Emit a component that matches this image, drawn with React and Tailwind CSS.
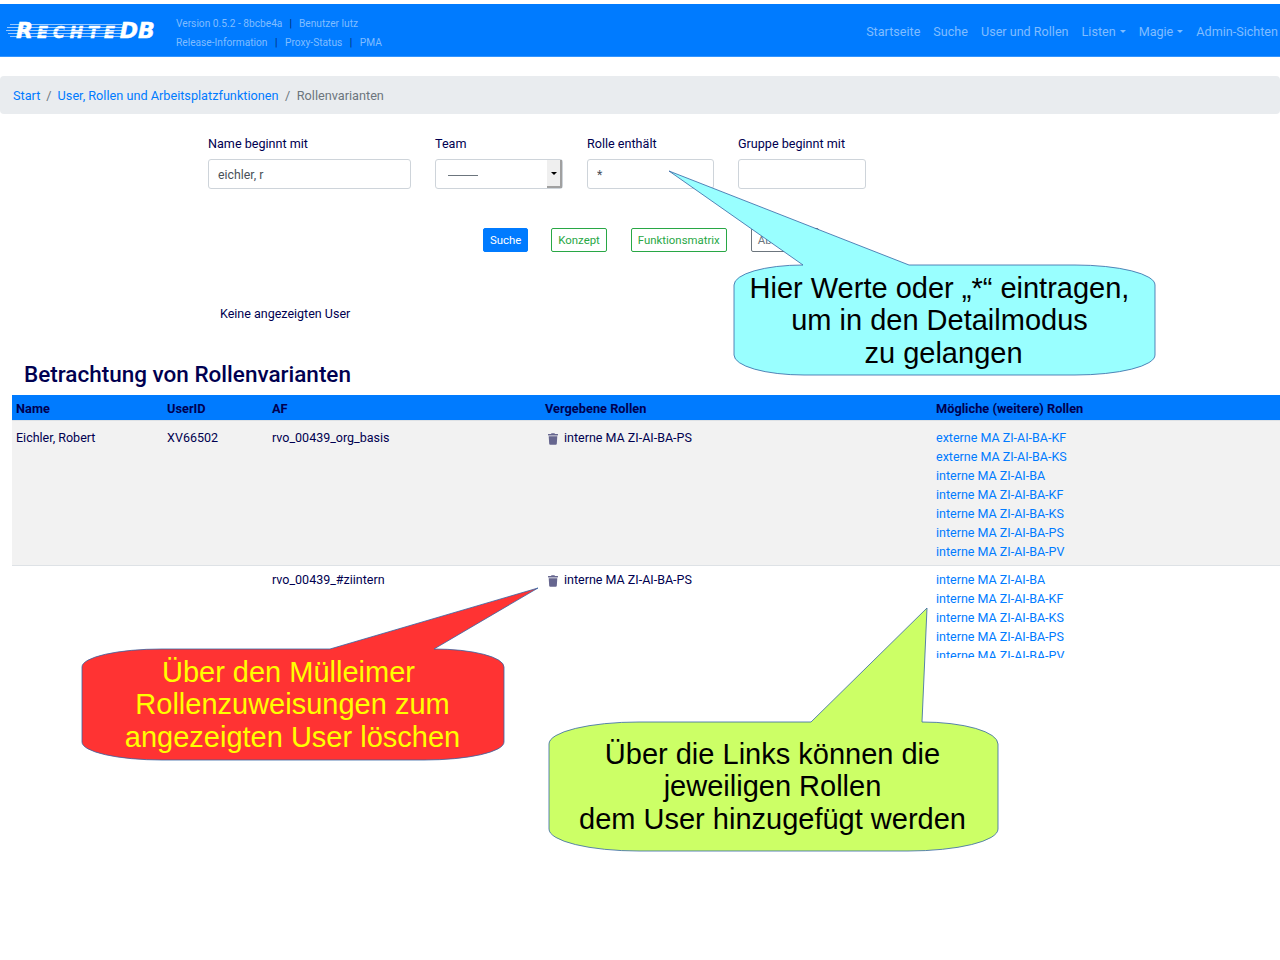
import React from 'react';
import { FaTrash } from 'react-icons/fa';

const moegliche1 = [
    'externe MA ZI-AI-BA-KF',
    'externe MA ZI-AI-BA-KS',
    'interne MA ZI-AI-BA',
    'interne MA ZI-AI-BA-KF',
    'interne MA ZI-AI-BA-KS',
    'interne MA ZI-AI-BA-PS',
    'interne MA ZI-AI-BA-PV',
];

const moegliche2 = [
    'interne MA ZI-AI-BA',
    'interne MA ZI-AI-BA-KF',
    'interne MA ZI-AI-BA-KS',
    'interne MA ZI-AI-BA-PS',
    'interne MA ZI-AI-BA-PV',
];

function Logo() {
    return (
        <div className="relative w-[154px] h-[24px] ml-[6px]">
            <svg className="absolute inset-0" width="154" height="24" viewBox="0 0 154 24">
                <g fill="#ffffff" fillOpacity="0.6">
                    <rect x="4" y="6" width="112" height="1" />
                    <rect x="1" y="9" width="116" height="1" />
                    <rect x="0" y="12" width="118" height="1" />
                    <rect x="2" y="15" width="116" height="1" />
                    <rect x="4" y="18" width="112" height="1" />
                </g>
            </svg>
            <div className="absolute left-[10px] top-[1px] font-['DejaVu_Sans',sans-serif] font-bold italic text-white whitespace-nowrap leading-[24px] flex items-baseline [-webkit-text-stroke:0.5px_white]">
                <span className="text-[22px] mr-[4px]">R</span>
                <span className="text-[16px] tracking-[5px]">ECHTE</span>
                <span className="text-[22px]">DB</span>
            </div>
            <svg className="absolute inset-0" width="154" height="24" viewBox="0 0 154 24">
                <g fill="#007bff" fillOpacity="0.4">
                    <rect x="26" y="10" width="88" height="1" />
                    <rect x="26" y="13" width="88" height="1" />
                    <rect x="26" y="16" width="88" height="1" />
                </g>
            </svg>
        </div>
    );
}

function NavItem({ children, caret }) {
    return (
        <span className="flex items-center gap-[4px] text-[#80bdff]">
            {children}
            {caret && <span className="w-0 h-0 border-x-[3.5px] border-x-transparent border-t-[3.5px] border-t-[#80bdff]"></span>}
        </span>
    );
}

function Navbar() {
    return (
        <nav className="mt-[4px] h-[53px] bg-[#007bff] flex items-center justify-between border-b border-[#3395ff]">
            <div className="flex items-center">
                <Logo />
                <div className="ml-[16px] pt-[5px] text-[10.2px] leading-[19px] text-[#80bdff]">
                    <div className="flex">
                        <span>Version 0.5.2 - 8bcbe4a</span>
                        <span className="mx-[7px] text-[#002a70]">|</span>
                        <span>Benutzer lutz</span>
                    </div>
                    <div className="flex">
                        <span>Release-Information</span>
                        <span className="mx-[7.5px] text-[#002a70]">|</span>
                        <span>Proxy-Status</span>
                        <span className="mx-[7.5px] text-[#002a70]">|</span>
                        <span>PMA</span>
                    </div>
                </div>
            </div>
            <div className="flex items-center gap-[13px] text-[12.6px] pr-[2px] pt-[4px]">
                <NavItem>Startseite</NavItem>
                <NavItem>Suche</NavItem>
                <NavItem>User und Rollen</NavItem>
                <NavItem caret>Listen</NavItem>
                <NavItem caret>Magie</NavItem>
                <NavItem>Admin-Sichten</NavItem>
            </div>
        </nav>
    );
}

function Field({ label, className, children }) {
    return (
        <div className={className}>
            <div className="text-[12.6px] leading-[16px] mb-[7px]">{label}</div>
            {children}
        </div>
    );
}

function TextInput({ value }) {
    return (
        <input
            readOnly
            defaultValue={value}
            className="block w-full h-[30px] px-[9px] pt-[2px] border border-[#ced4da] rounded-[3px] text-[12.3px] text-[#495057] bg-white outline-none"
        />
    );
}

function Btn({ className, children }) {
    return (
        <span className={`h-[24px] px-[6px] pt-[1px] flex items-center rounded-[2px] border text-[11.4px] ${className}`}>
            {children}
        </span>
    );
}

function RoleRow({ af, roles, className }) {
    return (
        <div className={`grid grid-cols-[151px_105px_273px_391px_1fr] ${className}`}>
            {af.map((text, i) => (
                <div key={i} className="pl-[4px]">{text}</div>
            ))}
            <div className="pl-[7px] flex items-start">
                <FaTrash className="mt-[5px] mr-[6px] w-[10px] h-[12px] text-[#66668f]" />
                <span>interne MA ZI-AI-BA-PS</span>
            </div>
            <div className="pl-[4px] text-[#007bff]">
                {roles.map(r => <div key={r}>{r}</div>)}
            </div>
        </div>
    );
}

function Callout({ x, w, path, fill, textClass, lines, textTop }) {
    return (
        <div className="absolute left-0 top-0 pointer-events-none">
            <svg className="absolute left-0 top-0" width="1280" height="960" viewBox="0 0 1280 960">
                <path d={path} fill={fill} stroke="#3465a4" strokeWidth="0.8" />
            </svg>
            <div
                className={`absolute text-center font-['Liberation_Sans',sans-serif] text-[29px] leading-[32.5px] whitespace-pre ${textClass}`}
                style={{ left: x, top: textTop, width: w }}
            >
                {lines.map(l => <div key={l}>{l}</div>)}
            </div>
        </div>
    );
}

export default function App() {
    return (
        <div className="relative w-[1280px] h-[960px] overflow-hidden bg-white font-['Roboto',sans-serif] text-[#000050]">
            <Navbar />

            {/* Breadcrumb */}
            <div className="mt-[19px] h-[38px] pt-[2px] bg-[#e9ecef] rounded-[4px] flex items-center pl-[13px] text-[12.7px]">
                <span className="text-[#007bff]">Start</span>
                <span className="mx-[6px] text-[#6c757d]">/</span>
                <span className="text-[#007bff]">User, Rollen und Arbeitsplatzfunktionen</span>
                <span className="mx-[6.5px] text-[#6c757d]">/</span>
                <span className="text-[#6c757d]">Rollenvarianten</span>
            </div>

            {/* Filter form */}
            <div className="mt-[22px] ml-[208px] flex gap-[24px]">
                <Field label="Name beginnt mit" className="w-[203px]">
                    <TextInput value="eichler, r" />
                </Field>
                <Field label="Team" className="w-[128px]">
                    <div className="relative h-[30px] border border-[#ced4da] rounded-[3px] bg-white">
                        <div className="absolute left-[12px] top-[15px] w-[30px] h-px bg-[#6c757d]"></div>
                        <div className="absolute right-0 top-0 bottom-0 w-[15px] bg-[#efefef] border-r-2 border-b-2 border-[#a0a0a0] flex items-center justify-center">
                            <span className="w-0 h-0 border-x-[3px] border-x-transparent border-t-[3px] border-t-black"></span>
                        </div>
                    </div>
                </Field>
                <Field label="Rolle enthält" className="w-[127px]">
                    <TextInput value="*" />
                </Field>
                <Field label="Gruppe beginnt mit" className="w-[128px]">
                    <TextInput value="" />
                </Field>
            </div>

            {/* Buttons */}
            <div className="mt-[39px] ml-[483px] flex gap-[24px]">
                <Btn className="mr-[-1px] bg-[#007bff] border-[#007bff] text-white">Suche</Btn>
                <Btn className="border-[#28a745] text-[#28a745]">Konzept</Btn>
                <Btn className="border-[#28a745] text-[#28a745]">Funktionsmatrix</Btn>
                <Btn className="border-[#6c757d] text-[#6c757d]">Abbrechen</Btn>
            </div>

            <div className="mt-[54px] ml-[220px] text-[12.5px] leading-[16px]">Keine angezeigten User</div>

            <h2 className="mt-[38px] ml-[24px] text-[22.5px] leading-[28px] font-medium">Betrachtung von Rollenvarianten</h2>

            {/* Table */}
            <div className="mt-[7px] ml-[12px] h-[263px] overflow-hidden text-[12.5px] leading-[19px]">
                <div className="h-[26px] pt-[1px] bg-[#007bff] grid grid-cols-[151px_105px_273px_391px_1fr] items-center font-bold text-[12.8px] border-b border-[#dee2e6]">
                    <div className="pl-[4px]">Name</div>
                    <div className="pl-[4px]">UserID</div>
                    <div className="pl-[4px]">AF</div>
                    <div className="pl-[4px]">Vergebene Rollen</div>
                    <div className="pl-[4px]">Mögliche (weitere) Rollen</div>
                </div>
                <RoleRow
                    af={['Eichler, Robert', 'XV66502', 'rvo_00439_org_basis']}
                    roles={moegliche1}
                    className="bg-[#f2f2f2] pt-[7px] h-[145px] border-b border-[#dee2e6]"
                />
                <RoleRow
                    af={['', '', 'rvo_00439_#ziintern']}
                    roles={moegliche2}
                    className="pt-[4px]"
                />
            </div>

            {/* Annotation callouts */}
            <Callout
                path="M803,265 L669,171 L909,265 L1075,265 A80,20 0 0 1 1155,285 L1155,355 A80,20 0 0 1 1075,375 L804,375 A70,20 0 0 1 734,355 L734,285 A69,20 0 0 1 803,265 Z"
                fill="#99ffff"
                textClass="text-black"
                x={734} w={419} textTop={271.7}
                lines={['Hier Werte oder „*“ eintragen, ', 'um in den Detailmodus ', 'zu gelangen']}
            />
            <Callout
                path="M330,649 L538,588 L434,649 A70,18 0 0 1 504,667 L504,742 A80,18 0 0 1 424,760 L162,760 A80,18 0 0 1 82,742 L82,667 A80,18 0 0 1 162,649 Z"
                fill="#ff3333"
                textClass="text-[#ffff00]"
                x={82} w={421} textTop={655.7}
                lines={['Über den Mülleimer ', 'Rollenzuweisungen zum', 'angezeigten User löschen']}
            />
            <Callout
                path="M811,722 L927,608 L922,722 A76,22 0 0 1 998,744 L998,829 A90,22 0 0 1 908,851 L639,851 A90,22 0 0 1 549,829 L549,744 A90,22 0 0 1 639,722 Z"
                fill="#ccff66"
                textClass="text-black"
                x={549} w={447} textTop={737.7}
                lines={['Über die Links können die', 'jeweiligen Rollen', 'dem User hinzugefügt werden']}
            />
        </div>
    );
}
